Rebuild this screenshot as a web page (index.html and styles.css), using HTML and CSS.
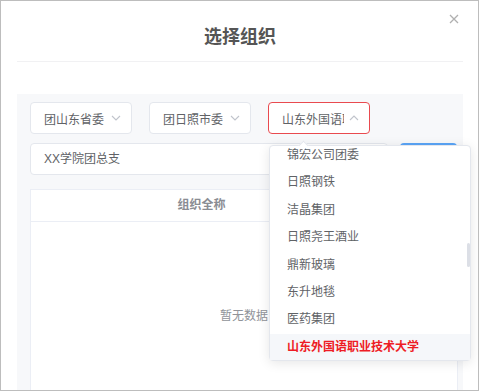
FILE: index.html
```html
<!DOCTYPE html>
<html lang="zh-CN">
	<head>
		<meta charset="utf-8">
		<title>选择组织</title>
		<link rel="stylesheet" href="styles.css">
	</head>
	<body>
		<div class="dialog">
			<div class="dialog-header">
				<span class="dialog-title">选择组织</span>
				<span class="close">
					<svg width="10" height="10" viewBox="0 0 10 10"><path d="M1 1L9 9M9 1L1 9" stroke="#b0b0b0" stroke-width="1.3" fill="none"/></svg>
				</span>
			</div>

			<div class="panel">
				<div class="select-row">
					<div class="select">
						<span class="select-text">团山东省委</span>
						<svg class="arrow" width="10" height="6" viewBox="0 0 10 6"><path d="M1 1L5 5L9 1" stroke="#c0c4cc" stroke-width="1.1" fill="none"/></svg>
					</div>
					<div class="select">
						<span class="select-text">团日照市委</span>
						<svg class="arrow" width="10" height="6" viewBox="0 0 10 6"><path d="M1 1L5 5L9 1" stroke="#c0c4cc" stroke-width="1.1" fill="none"/></svg>
					</div>
					<div class="select select-open">
						<span class="select-text">山东外国语职业技术大学</span>
						<svg class="arrow" width="10" height="6" viewBox="0 0 10 6"><path d="M1 5L5 1L9 5" stroke="#c0c4cc" stroke-width="1.1" fill="none"/></svg>

						<div class="dropdown">
							<span class="popper-arrow"></span>
							<ul class="dropdown-list">
								<li>锦宏公司团委</li>
								<li>日照钢铁</li>
								<li>洁晶集团</li>
								<li>日照尧王酒业</li>
								<li>鼎新玻璃</li>
								<li>东升地毯</li>
								<li>医药集团</li>
								<li class="selected">山东外国语职业技术大学</li>
							</ul>
							<span class="scroll-thumb"></span>
						</div>
					</div>
				</div>

				<div class="search-row">
					<div class="input">XX学院团总支</div>
					<button type="button" class="btn-primary">查询</button>
				</div>

				<div class="table">
					<div class="table-head">
						<div class="th th-name">组织全称</div>
						<div class="th th-op"></div>
					</div>
					<div class="table-empty">暂无数据</div>
				</div>
			</div>
		</div>
	</body>
</html>
```

FILE: styles.css
```css
	* {
		box-sizing: border-box;
	}

	body {
		margin: 0;
		background: #fff;
		font-family: "Liberation Sans", "Noto Sans CJK SC", sans-serif;
		font-size: 12px;
		color: #606266;
	}

	.dialog {
		width: 479px;
		height: 391px;
		border: 1px solid #bdbdbd;
		background: #fff;
		overflow: hidden;
		position: relative;
	}

	.dialog-header {
		margin-left: 16px;
		width: 446px;
		height: 61px;
		border-bottom: 1px solid #f1f1f3;
		text-align: center;
		padding-top: 24px;
	}

	.dialog-title {
		font-size: 18px;
		line-height: 24px;
		font-weight: bold;
		color: #555;
	}

	.close {
		position: absolute;
		top: 13px;
		right: 19px;
		line-height: 0;
	}

	.panel {
		margin: 32px 0 0 16px;
		width: 446px;
		height: 320px;
		background: #f7f8fa;
		padding: 8px 0 0 13px;
	}

	.select-row {
		display: flex;
		gap: 17px;
	}

	.select {
		position: relative;
		width: 102px;
		height: 32px;
		background: #fff;
		border: 1px solid #e4e7ed;
		border-radius: 4px;
		padding: 0 25px 0 13px;
		display: flex;
		align-items: center;
	}

	.select-text {
		white-space: nowrap;
		overflow: hidden;
		font-size: 12px;
		color: #606266;
	}

	.select .arrow {
		position: absolute;
		right: 10px;
		top: 12px;
	}

	.select-open {
		border-color: #e94a4f;
	}

	.dropdown {
		position: absolute;
		left: 0;
		top: 42px;
		width: 202px;
		height: 216px;
		background: #fff;
		border: 1px solid #e4e7ed;
		border-radius: 4px;
		box-shadow: 0 2px 12px rgba(0, 0, 0, 0.1);
		z-index: 10;
	}

	.popper-arrow {
		position: absolute;
		top: -4px;
		left: 30px;
		width: 7px;
		height: 7px;
		background: #fff;
		border-left: 1px solid #e4e7ed;
		border-top: 1px solid #e4e7ed;
		transform: rotate(45deg);
	}

	.dropdown-list {
		list-style: none;
		margin: 0;
		padding: 0;
		height: 214px;
		overflow: hidden;
	}

	.dropdown-list li {
		height: 27.4px;
		line-height: 27.4px;
		padding: 0 17px;
		font-size: 12px;
		color: #606266;
		white-space: nowrap;
	}

	.dropdown-list li:first-child {
		margin-top: -4px;
	}

	.dropdown-list li.selected {
		color: #ee1c25;
		font-weight: bold;
		background: #f5f7fa;
	}

	.scroll-thumb {
		position: absolute;
		right: 0;
		top: 97px;
		width: 3px;
		height: 24px;
		border-radius: 2px;
		background: #dcdfe6;
	}

	.search-row {
		display: flex;
		margin-top: 9px;
		height: 32px;
	}

	.input {
		width: 358px;
		height: 32px;
		background: #fff;
		border: 1px solid #e4e7ed;
		border-radius: 4px;
		padding-left: 13px;
		line-height: 30px;
		font-size: 12px;
		color: #606266;
	}

	.btn-primary {
		margin-left: 12px;
		width: 57px;
		height: 32px;
		border: none;
		border-radius: 4px;
		background: #5aa5f7;
		color: #fff;
		font: 12px "Liberation Sans", "Noto Sans CJK SC", sans-serif;
	}

	.table {
		margin-top: 14px;
		width: 428px;
		height: 240px;
		background: #fff;
		border: 1px solid #ebeef5;
	}

	.table-head {
		display: flex;
		height: 32px;
		border-bottom: 1px solid #ebeef5;
	}

	.th {
		line-height: 31px;
		font-size: 12px;
		font-weight: bold;
		color: #8a8d93;
		text-align: center;
	}

	.th-name {
		width: 341px;
	}

	.th-op {
		flex: 1;
	}

	.table-empty {
		height: 188px;
		line-height: 188px;
		text-align: center;
		font-size: 12px;
		color: #909399;
	}
```
